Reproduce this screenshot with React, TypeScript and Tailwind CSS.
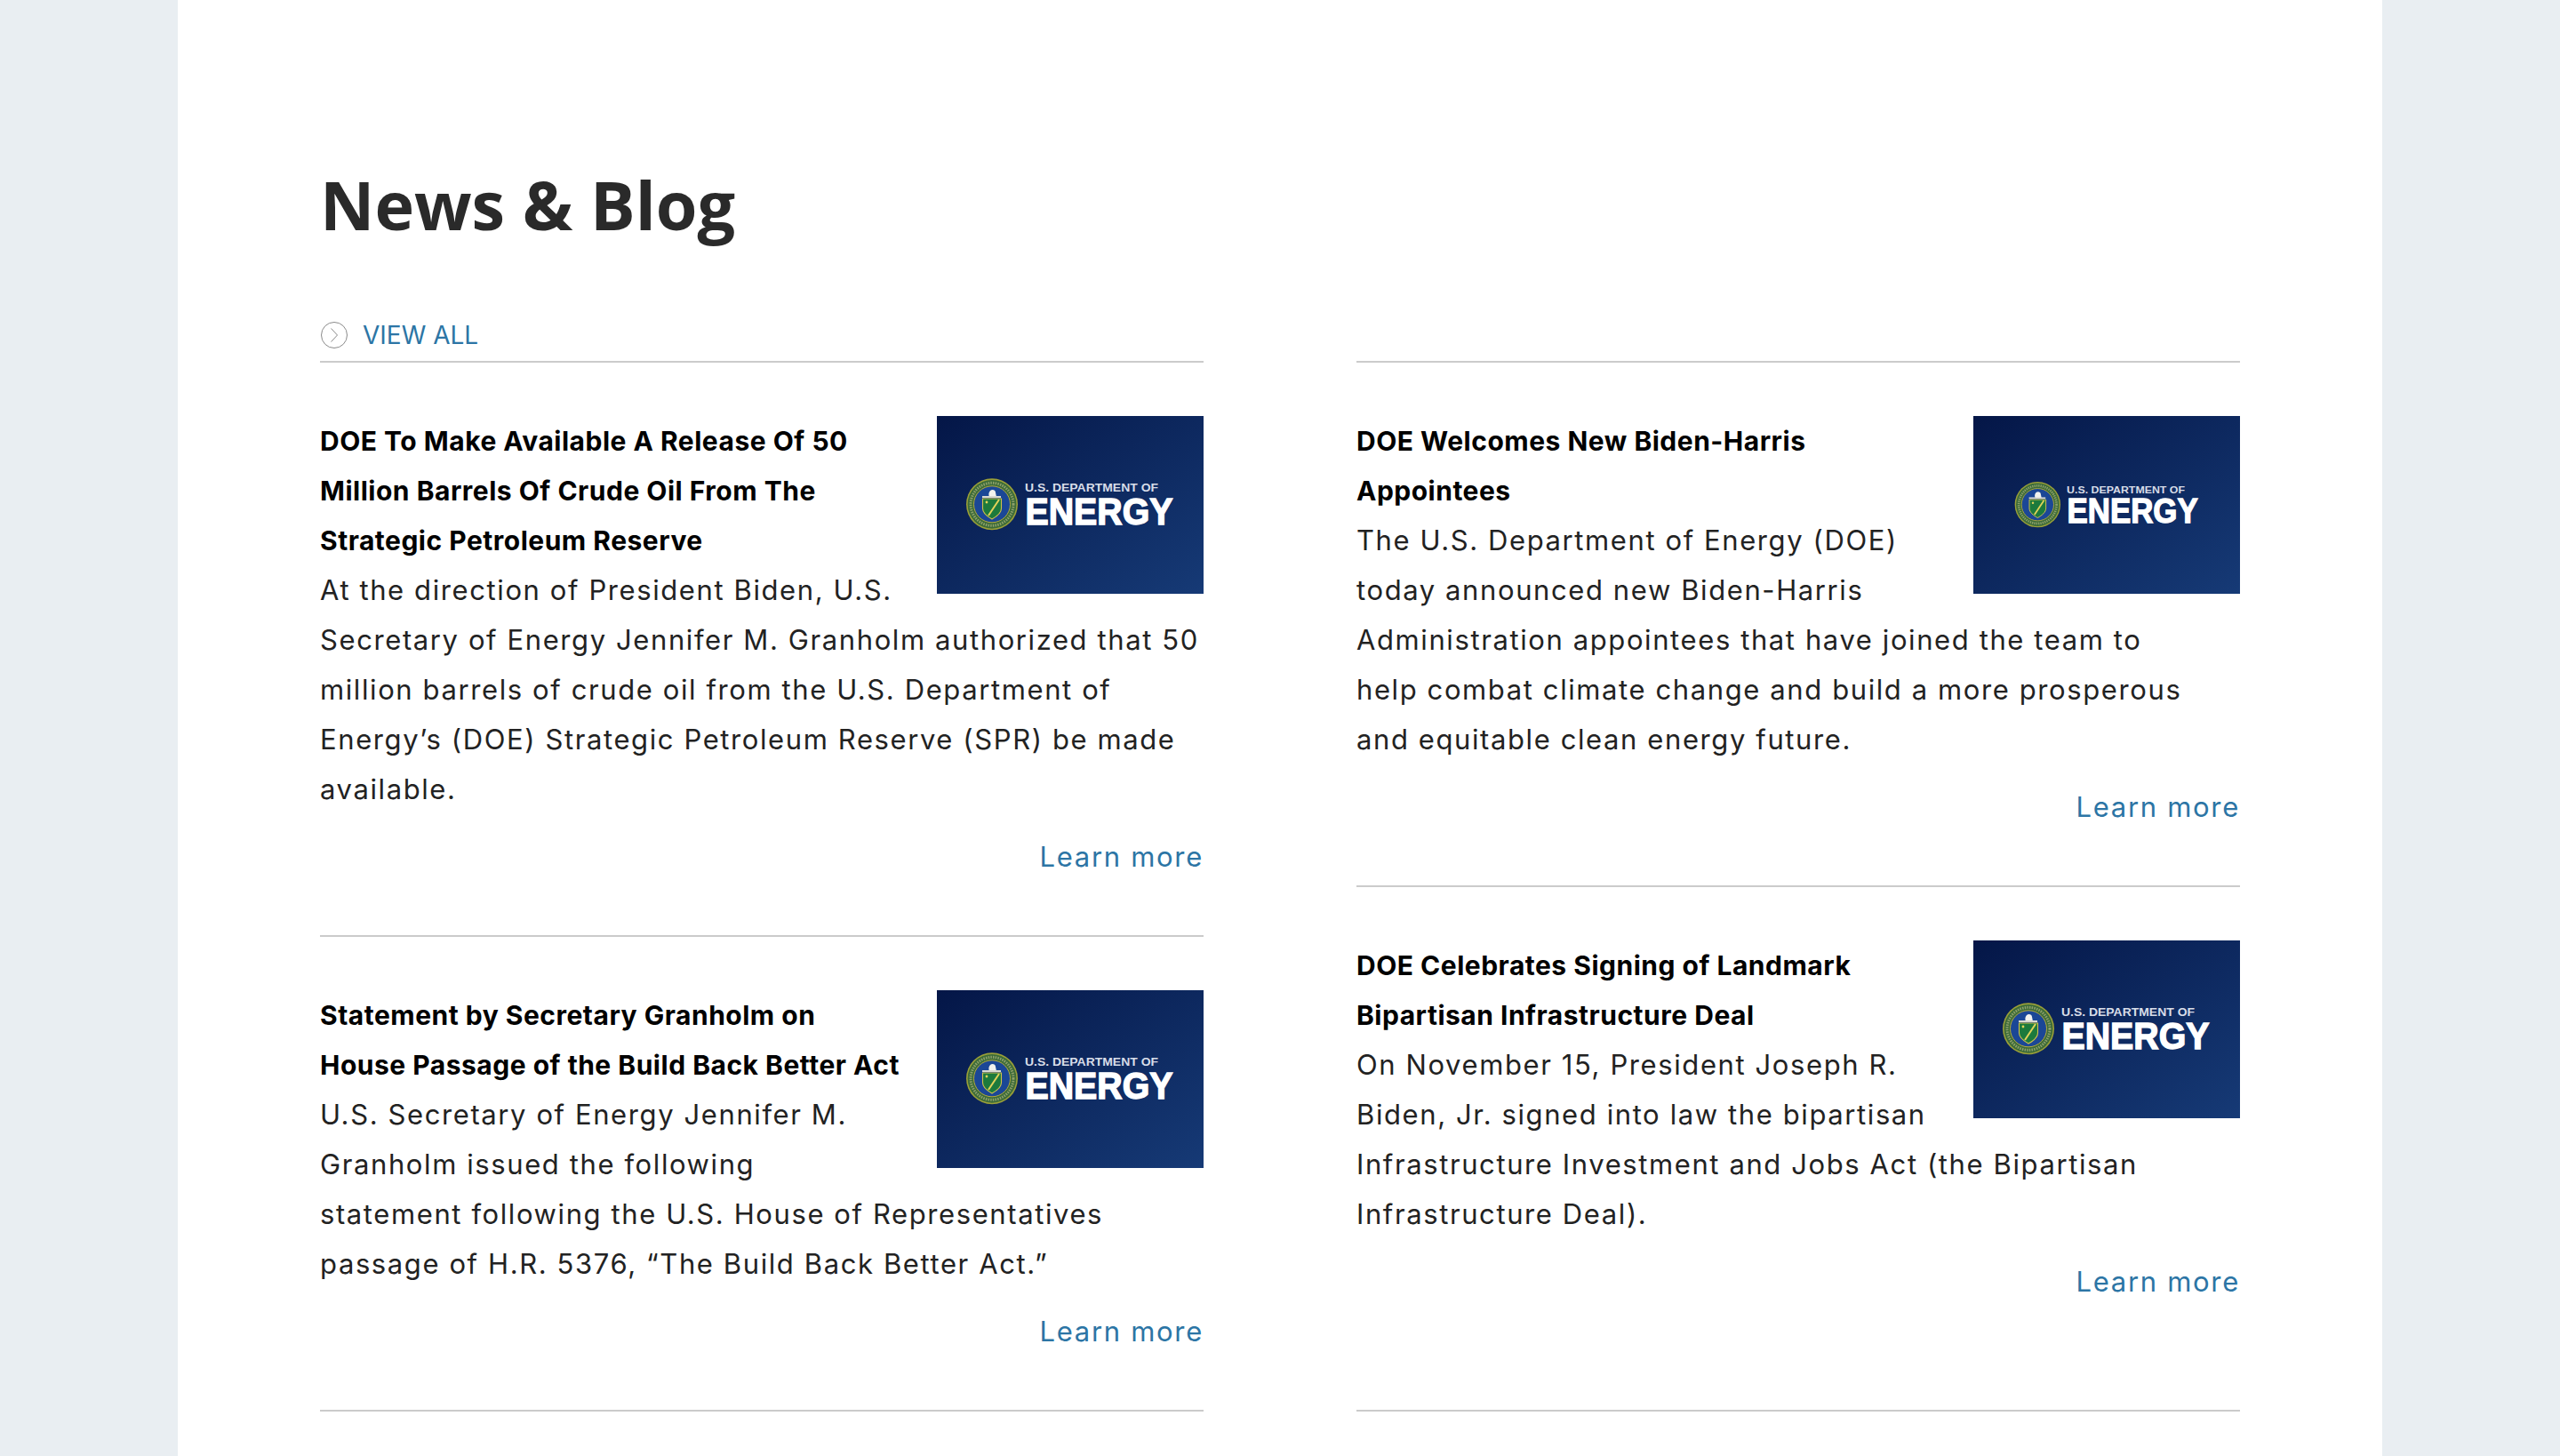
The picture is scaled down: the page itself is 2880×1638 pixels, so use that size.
const articles = {
  left: [
    {
      title: "DOE To Make Available A Release Of 50 Million Barrels Of Crude Oil From The Strategic Petroleum Reserve",
      body: "At the direction of President Biden, U.S. Secretary of Energy Jennifer M. Granholm authorized that 50 million barrels of crude oil from the U.S. Department of Energy’s (DOE) Strategic Petroleum Reserve (SPR) be made available.",
      small: false,
    },
    {
      title: "Statement by Secretary Granholm on House Passage of the Build Back Better Act",
      body: "U.S. Secretary of Energy Jennifer M. Granholm issued the following statement following the U.S. House of Representatives passage of H.R. 5376, “The Build Back Better Act.”",
      small: false,
    },
  ],
  right: [
    {
      title: "DOE Welcomes New Biden-Harris Appointees",
      body: "The U.S. Department of Energy (DOE) today announced new Biden-Harris Administration appointees that have joined the team to\nhelp combat climate change and build a more prosperous and equitable clean energy future.",
      small: true,
    },
    {
      title: "DOE Celebrates Signing of Landmark Bipartisan Infrastructure Deal",
      body: "On November 15, President Joseph R. Biden, Jr. signed into law the bipartisan Infrastructure Investment and Jobs Act (the Bipartisan Infrastructure Deal).",
      small: false,
    },
  ],
};

function EnergyLogo({ small }: { small: boolean }) {
  return (
    <svg viewBox="0 0 300 200" className="float-right ml-10 w-[300px] h-[200px]">
      <defs>
        <linearGradient id="doeBg" x1="0" y1="0" x2="1" y2="1">
          <stop offset="0" stopColor="#041647" />
          <stop offset="1" stopColor="#163a76" />
        </linearGradient>
      </defs>
      <rect width="300" height="200" fill="url(#doeBg)" />
      <g transform={small ? "translate(17.4 11.7) scale(0.886)" : undefined}>
        <circle cx="62" cy="99.3" r="29" fill="#9a9f38" />
        <circle cx="62" cy="99.3" r="27.4" fill="#3c6b38" />
        <circle cx="62" cy="99.3" r="24" fill="none" stroke="#8fa06a" strokeWidth="3" strokeDasharray="1.5 1.2" />
        <circle cx="62" cy="99.3" r="20.5" fill="#1b4796" stroke="#b4aa3c" strokeWidth="1" />
        <path d="M60 84c2-2 6-1 6 2l1 5h-8c-1-2-1-5 1-7z" fill="#f2f2ee" />
        <rect x="51" y="90" width="21" height="2" fill="#d9d9d2" />
        <path d="M51.5 93h21v11c0 5-5 9-10.500 12-5.500-3-10.500-7-10.500-12z" fill="#1c7a3c" stroke="#d2c14a" strokeWidth="1.100" />
        <path d="M70 94l-12 18" stroke="#e3d35a" strokeWidth="2" />
        <circle cx="56" cy="97" r="1.400" fill="#e3d35a" />
        <text x="99" y="85.300" textLength="150" lengthAdjust="spacingAndGlyphs" fontSize="12" fontWeight="700" fill="#d8dde8" className="font-['Liberation_Sans',sans-serif] tracking-normal">U.S. DEPARTMENT OF</text>
        <text x="99.500" y="122.300" textLength="166" lengthAdjust="spacingAndGlyphs" fontSize="43" fontWeight="700" fill="#ffffff" stroke="#ffffff" strokeWidth="1.500" className="font-['Liberation_Sans',sans-serif] tracking-normal">ENERGY</text>
      </g>
    </svg>
  );
}

function Article({ item, grow }: { item: { title: string; body: string; small: boolean }; grow?: boolean }) {
  return (
    <article className={`border-b-2 border-[#cbcbcb] pt-[60px] pb-[60px] ${grow ? "flex-1" : ""}`}>
      <EnergyLogo small={item.small} />
      <h3 className="font-bold text-black text-[30px] tracking-[0.5px]">{item.title}</h3>
      <p className="tracking-[1.6px] whitespace-pre-line">{item.body}</p>
      <a className="block clear-both pt-5 text-right text-[#2c75a5] tracking-[1.7px]">Learn more</a>
    </article>
  );
}

export default function App() {
  return (
    <div className="min-h-[1638px] bg-[#e9eef2] font-['Inter',sans-serif]">
      <main className="mx-auto w-[2480px] h-[1638px] overflow-hidden bg-white px-40 pt-[180px]">
        <h2 className="text-[75.5px] leading-[100px] font-bold text-[#2a2a2a] font-['Open_Sans',sans-serif]">News &amp; Blog</h2>
        <div className="mt-[71px] grid grid-cols-2 gap-x-[172px] text-[31px] leading-[56px] text-[#222222]">
          <div className="flex flex-col">
            <ColumnHead link />
            <Article item={articles.left[0]} />
            <Article item={articles.left[1]} />
          </div>
          <div className="flex flex-col">
            <ColumnHead />
            <Article item={articles.right[0]} />
            <Article item={articles.right[1]} grow />
          </div>
        </div>
      </main>
    </div>
  );
}

function ColumnHead({ link }: { link?: boolean }) {
  return (
    <div className="h-[57px] flex items-start gap-4 border-b-2 border-[#cbcbcb]">
      {link && (
        <>
          <svg viewBox="0 0 32 32" className="mt-[10px] w-8 h-8" fill="none" stroke="#8a8a8a" strokeWidth="1">
            <circle cx="16" cy="16" r="14.500" />
            <path d="M12.500 8.500l7 7.500-7 7.500" />
          </svg>
          <span className="mt-[6px] text-[28px] leading-[40px] text-[#2c75a5]">VIEW ALL</span>
        </>
      )}
    </div>
  );
}
